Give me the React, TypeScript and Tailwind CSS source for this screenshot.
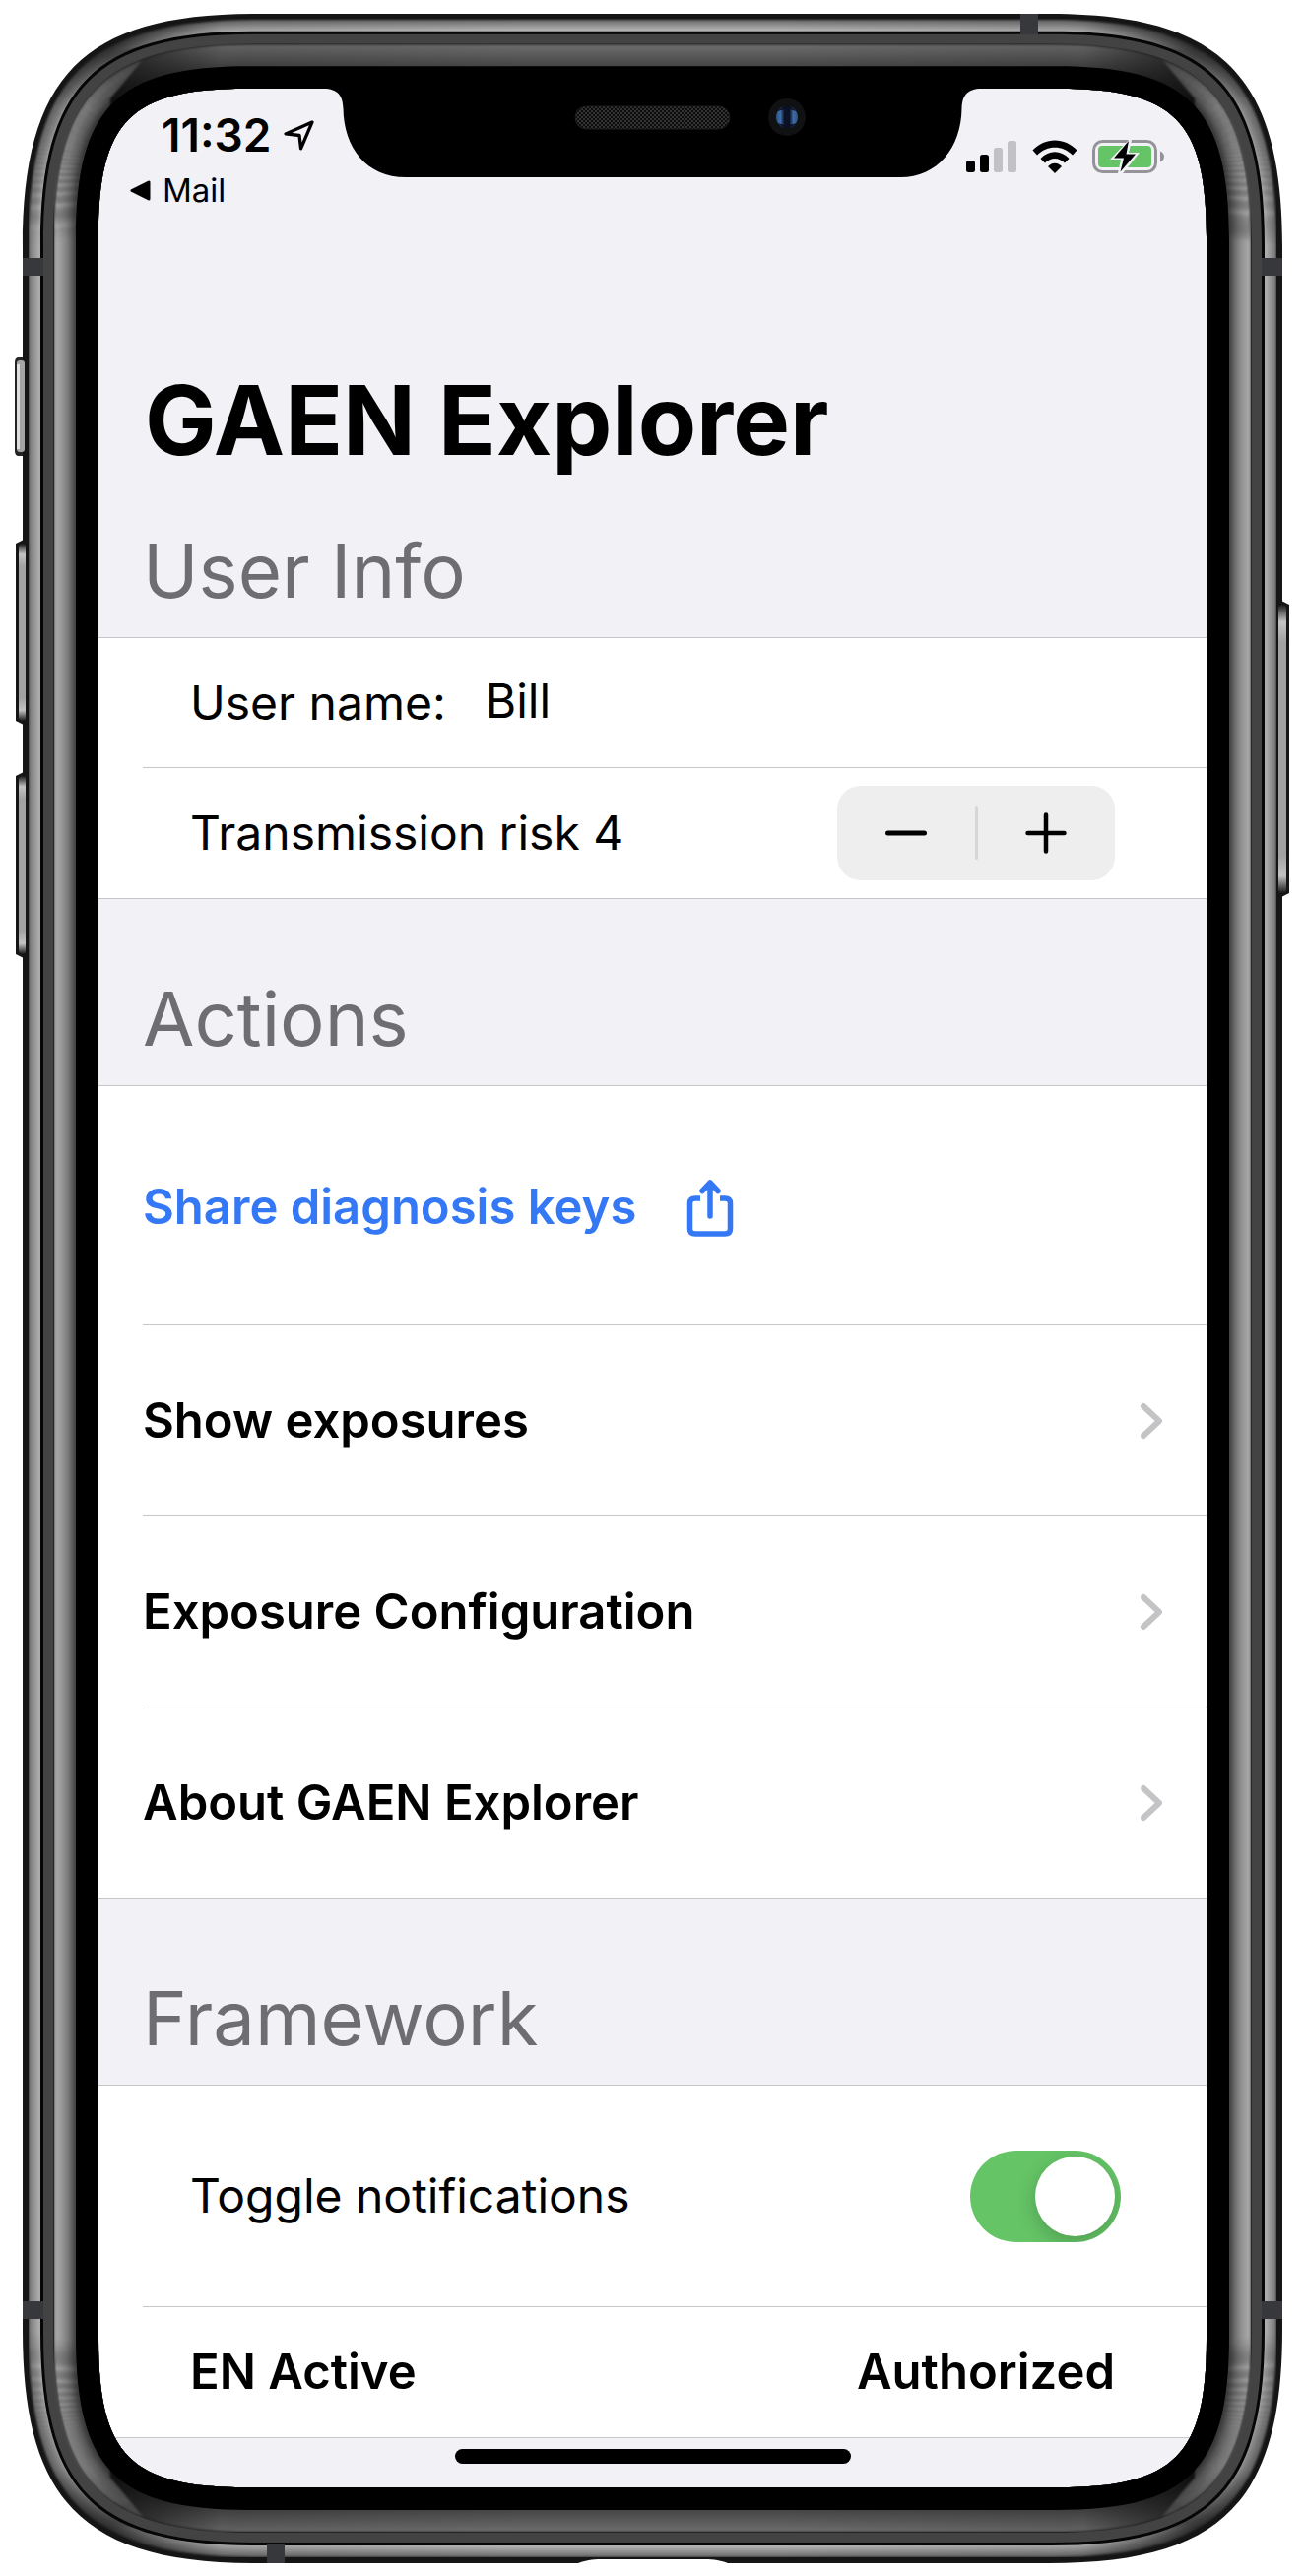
import { useState } from "react";
import type { ReactNode } from "react";

const W = 1325;
const H = 2616;

/** Continuous-corner outline of the handset, `d` pixels in from its outer edge. */
function outline(d: number) {
  const k = d / 77;
  const x0 = 23 + d;
  const x1 = 1302 - d;
  const y0 = 14 + k * 76;
  const y1 = 2603 - d;
  const e = 237 - 87 * k;
  const mid = 53 - 22 * k;
  const c = ((8 * mid) / e - 1) / 3;
  const q = e * c;
  return [
    `M${x0 + e} ${y0}H${x1 - e}`,
    `C${x1 - q} ${y0} ${x1} ${y0 + q} ${x1} ${y0 + e}`,
    `V${y1 - e}`,
    `C${x1} ${y1 - q} ${x1 - q} ${y1} ${x1 - e} ${y1}`,
    `H${x0 + e}`,
    `C${x0 + q} ${y1} ${x0} ${y1 - q} ${x0} ${y1 - e}`,
    `V${y0 + e}`,
    `C${x0} ${y0 + q} ${x0 + q} ${y0} ${x0 + e} ${y0}Z`,
  ].join("");
}

const SCREEN = outline(77);

function ring(from: number, inner = SCREEN) {
  return outline(from) + inner;
}

const grey = (v: number) => `rgb(${Math.round(v)},${Math.round(v)},${Math.round(v)})`;

interface Level {
  d: number;
  top: number;
  side: number;
}

function levels(from: number, to: number, top: number[], side: number[], bend: number): Level[] {
  const n = to - from;
  return Array.from({ length: n }, (_, i) => {
    const t = i / (n - 1);
    return {
      d: from + i,
      top: top[0] + (top[1] - top[0]) * t,
      side: side[0] + (side[1] - side[0]) * Math.pow(t, bend),
    };
  });
}

const RIM = levels(6, 18, [108, 182], [120, 176], 1);
const BEZEL = levels(32, 54, [108, 70], [166, 66], 1.8);
const BAND_END = outline(62);

function Bands({ id, items, left, right, low }: { id: string; items: Level[]; left: string; right: string; low: number }) {
  return (
    <g filter="url(#soft)">
      {items.map(({ d, top, side }) => (
        <g key={d}>
          <linearGradient id={`${id}t${d}`} gradientUnits="userSpaceOnUse" x1="0" x2={W} y1="0" y2="0">
            <stop offset="0.085" stopColor={grey(top * low)} />
            <stop offset="0.17" stopColor={grey(top * 0.9)} />
            <stop offset="0.4" stopColor={grey(top)} />
            <stop offset="0.6" stopColor={grey(top)} />
            <stop offset="0.83" stopColor={grey(top * 0.9)} />
            <stop offset="0.915" stopColor={grey(top * low)} />
          </linearGradient>
          <linearGradient id={`${id}s${d}`} gradientUnits="userSpaceOnUse" x1="0" x2="0" y1="0" y2={H}>
            <stop offset="0.022" stopColor={grey(side * 0.4)} />
            <stop offset="0.042" stopColor={grey(side * 0.85)} />
            <stop offset="0.085" stopColor={grey(side)} />
            <stop offset="0.915" stopColor={grey(side)} />
            <stop offset="0.958" stopColor={grey(side * 0.85)} />
            <stop offset="0.978" stopColor={grey(side * 0.4)} />
          </linearGradient>
          <path d={ring(d, BAND_END)} fillRule="evenodd" fill={`url(#${id}t${d})`} />
          <path d={ring(d, BAND_END)} fillRule="evenodd" fill={`url(#${id}s${d})`} clipPath={`url(#${left})`} />
          <path d={ring(d, BAND_END)} fillRule="evenodd" fill={`url(#${id}s${d})`} clipPath={`url(#${right})`} />
        </g>
      ))}
    </g>
  );
}

const BEZEL_LEFT = "0,0 200,0 143,63 112,100 112,2516 143,2553 200,2616 0,2616";
const BEZEL_RIGHT = "1325,0 1125,0 1182,63 1213,100 1213,2516 1182,2553 1125,2616 1325,2616";
const RIM_LEFT = "0,0 60,58 142,49 120,80 120,2537 142,2567 60,2558 0,2616";
const RIM_RIGHT = "1325,0 1265,58 1183,49 1205,80 1205,2537 1183,2567 1265,2558 1325,2616";

function SideKey({ x, y, h, flip }: { x: number; y: number; h: number; flip?: boolean }) {
  return (
    <g transform={flip ? `translate(${x + 11} ${y}) scale(-1 1)` : `translate(${x} ${y})`}>
      <path d={`M0 4L8 0V${h}L0 ${h - 4}Z`} fill="#161616" />
      <rect x="3" y="4" width="8" height={h - 8} rx="4" fill="url(#key)" />
    </g>
  );
}

function DeviceFrame() {
  return (
    <svg
      className="pointer-events-none absolute inset-0 h-full w-full"
      viewBox={`0 0 ${W} ${H}`}
      preserveAspectRatio="none"
      aria-hidden="true"
    >
      <defs>
        <filter id="soft" x="0" y="0" width="1" height="1" colorInterpolationFilters="sRGB">
          <feGaussianBlur stdDeviation="0.8" />
        </filter>
        <linearGradient id="key" x1="0" x2="0" y1="0" y2="1">
          <stop offset="0" stopColor="#1a1a1a" />
          <stop offset="0.06" stopColor="#c4c4c4" />
          <stop offset="0.13" stopColor="#a2a2a2" />
          <stop offset="0.87" stopColor="#a2a2a2" />
          <stop offset="0.94" stopColor="#c4c4c4" />
          <stop offset="1" stopColor="#1a1a1a" />
        </linearGradient>
        <linearGradient id="lens" x1="0" x2="1" y1="0" y2="0">
          <stop offset="0" stopColor="#2b5183" />
          <stop offset="0.2" stopColor="#3f6ea8" />
          <stop offset="0.38" stopColor="#0c1226" />
          <stop offset="0.62" stopColor="#0c1226" />
          <stop offset="0.8" stopColor="#3f6ea8" />
          <stop offset="1" stopColor="#2b5183" />
        </linearGradient>
        <pattern id="mesh" width="4" height="4" patternUnits="userSpaceOnUse">
          <rect width="4" height="4" fill="#0c0c0c" />
          <rect width="2" height="2" fill="#333" />
          <rect x="2" y="2" width="2" height="2" fill="#333" />
        </pattern>
        <clipPath id="bl"><polygon points={BEZEL_LEFT} /></clipPath>
        <clipPath id="br"><polygon points={BEZEL_RIGHT} /></clipPath>
        <clipPath id="rl"><polygon points={RIM_LEFT} /></clipPath>
        <clipPath id="rr"><polygon points={RIM_RIGHT} /></clipPath>
      </defs>

      <path d={`M0 0H${W}V${H}H0Z${SCREEN}`} fillRule="evenodd" fill="#fff" />

      <path d="M19 363H26V463H19Q15 463 15 458V368Q15 363 19 363Z" fill="#242426" />
      <SideKey x={16} y={548} h={188} />
      <SideKey x={16} y={784} h={189} />

      <path d={ring(0)} fillRule="evenodd" fill="#151515" />
      <Bands id="r" items={RIM} left="rl" right="rr" low={0.4} />
      <path d={ring(18)} fillRule="evenodd" fill="#060606" />
      <path d={ring(21)} fillRule="evenodd" fill="#434343" />
      <path d={ring(31)} fillRule="evenodd" fill="#252525" />
      <Bands id="b" items={BEZEL} left="bl" right="br" low={0.2} />
      <path d={ring(54)} fillRule="evenodd" fill="#000" />

      <rect x="17" y="366" width="8" height="93" rx="3" fill="#a5a5a5" />
      <rect x="17" y="370" width="3" height="86" fill="#dedede" />
      <rect x="20" y="552" width="6" height="180" rx="3" fill="url(#key)" />
      <rect x="20" y="788" width="6" height="181" rx="3" fill="url(#key)" />
      <SideKey x={1298} y={610} h={301} flip />

      <g fill="#37383c">
        <rect x="23" y="262" width="21" height="18" />
        <rect x="1281" y="262" width="21" height="18" />
        <rect x="23" y="2337" width="21" height="18" />
        <rect x="1281" y="2337" width="21" height="18" />
        <rect x="1036" y="14" width="18" height="21" />
        <rect x="271" y="2583" width="18" height="20" />
      </g>
      <path d="M584 2604C594 2600 602 2599 610 2599H716C724 2599 732 2600 742 2604Z" fill="#fff" />

      <path
        d="M328 89V90C344 90 348 98 348.500 110C349 150 372 180 412 180H914C952 180 976 150 976.500 110C977 98 981 90 997 90V89Z"
        fill="#000"
      />
      <rect x="584" y="108" width="157" height="23" rx="11.500" fill="url(#mesh)" stroke="#1c1c1c" />
      <circle cx="799" cy="119" r="19" fill="#101113" />
      <circle cx="799" cy="119" r="11" fill="url(#lens)" />
      <path d="M790 113A11 11 0 0 1 808 113Q799 109 790 113Z" fill="#0b1024" />
      <path d="M790 125A11 11 0 0 0 808 125Q799 129 790 125Z" fill="#0b1024" />
    </svg>
  );
}

function StatusBar() {
  return (
    <div className="flex h-[221px] items-start justify-between pt-5 pr-[42px] pl-8">
      <div className="flex flex-col">
        <div className="flex items-center gap-3 pl-8">
          <time className="text-[46px] leading-[54px] font-semibold">11:32</time>
          <svg width="31" height="31" viewBox="0 0 30 30" fill="none" stroke="#000" strokeWidth="3.2" strokeLinejoin="round" aria-hidden="true">
            <path d="M28 2L2 13.500L15.500 15L17 28Z" />
          </svg>
        </div>
        <a href="#mail" className="flex items-center gap-3 text-[33px] leading-[58px]">
          <svg width="21" height="21" viewBox="0 0 21 21" aria-hidden="true">
            <path d="M2 10.500L19 2V19Z" stroke="#000" strokeWidth="3" strokeLinejoin="round" />
          </svg>
          Mail
        </a>
      </div>
      <div className="flex items-center gap-[15px] pt-[31px]" role="img" aria-label="Two signal bars, Wi-Fi, charging">
        <svg width="52" height="34" viewBox="0 0 52 34">
          <rect x="0" y="21" width="9" height="12" rx="2.500" />
          <rect x="14" y="15" width="9" height="18" rx="2.500" />
          <rect x="28" y="8" width="9" height="25" rx="2.500" fill="#c1c1c6" />
          <rect x="42" y="1" width="9" height="32" rx="2.500" fill="#c1c1c6" />
        </svg>
        <svg width="46" height="34" viewBox="0 0 46 34">
          <path d="M0.500 10.500C13-3 33-3 45.500 10.500L41 15.500C31 5 15 5 5 15.500Z" />
          <path d="M8.500 19C17 10 29 10 37.500 19L33 23.500C27 17.500 19 17.500 13 23.500Z" />
          <path d="M16 27C20 22.500 26 22.500 30 27L23 34Z" />
        </svg>
        <svg width="74" height="36" viewBox="0 0 74 36">
          <rect x="1.500" y="2.500" width="63" height="31" rx="9" fill="none" stroke="#949498" strokeWidth="3" />
          <rect x="6" y="7" width="54" height="22" rx="4" fill="#65c466" />
          <path d="M69 12.500Q73 14.500 73 18T69 23.500Z" fill="#949498" />
          <path d="M37 1L18 21H29L26 35L31 35L48 14H37L40 1Z" fill="#f2f1f6" />
          <path d="M37 2L22 19.500H32L28.500 33.500L44 15.500H34.500Z" />
        </svg>
      </div>
    </div>
  );
}

function SectionTitle({ children, first }: { children: ReactNode; first?: boolean }) {
  return (
    <h2
      className={`border-b border-[#c6c6c8] px-[45px] pb-4 text-[76px] leading-[104px] text-[#6d6d72] ${first ? "pt-10" : "pt-[69px]"}`}
    >
      {children}
    </h2>
  );
}

function LinkRow({ label }: { label: string }) {
  return (
    <li className="ml-[45px] border-b border-[#c6c6c8] last:ml-0 last:pl-[45px]">
      <a href="#open" className="flex h-[193px] items-center justify-between pr-[43px] text-[49px] font-semibold">
        {label}
        <svg width="26" height="40" viewBox="0 0 26 40" fill="none" stroke="#c4c4c7" strokeWidth="6" strokeLinecap="round" strokeLinejoin="round" aria-hidden="true">
          <path d="M5 5L21 20L5 35" />
        </svg>
      </a>
    </li>
  );
}

export default function App() {
  const [name, setName] = useState("Bill");
  const [risk, setRisk] = useState(4);
  const [on, setOn] = useState(true);
  return (
    <div className="relative mx-auto w-full max-w-[1325px] bg-white px-[100px] pt-[90px] pb-[90px] font-['Inter',sans-serif] text-black">
      <main className="bg-[#f2f1f6]">
        <StatusBar />
        <h1 className="px-[47px] pt-[56px] text-[97px] leading-[120px] font-bold">GAEN Explorer</h1>

        <section>
          <SectionTitle first>User Info</SectionTitle>
          <div className="bg-white">
            <div className="ml-[45px] flex h-[132px] items-center gap-10 border-b border-[#c6c6c8] pr-[93px] pl-12 text-[48px]">
              <label htmlFor="user-name">User name:</label>
              <input
                id="user-name"
                value={name}
                onChange={(e) => setName(e.target.value)}
                className="mb-1 min-w-0 flex-1 bg-transparent outline-none"
              />
            </div>
            <div className="flex h-[133px] items-center justify-between border-b border-[#c6c6c8] pr-[93px] pl-[93px] text-[48px]">
              <span>Transmission risk {risk}</span>
              <div className="flex h-24 w-[282px] items-center rounded-3xl bg-[#eeeeee]">
                <button
                  type="button"
                  aria-label="Decrease risk"
                  className="flex h-full flex-1 items-center justify-center"
                  onClick={() => setRisk(Math.max(0, risk - 1))}
                >
                  <svg width="44" height="44" viewBox="0 0 44 44" stroke="#000" strokeWidth="5" strokeLinecap="round">
                    <path d="M3.500 22H40.500" />
                  </svg>
                </button>
                <span className="h-[54px] w-[3px] rounded bg-[#d6d6d8]" />
                <button
                  type="button"
                  aria-label="Increase risk"
                  className="flex h-full flex-1 items-center justify-center"
                  onClick={() => setRisk(Math.min(7, risk + 1))}
                >
                  <svg width="44" height="44" viewBox="0 0 44 44" stroke="#000" strokeWidth="4.500" strokeLinecap="round">
                    <path d="M3.500 22H40.500M22 3.500V40.500" />
                  </svg>
                </button>
              </div>
            </div>
          </div>
        </section>

        <section>
          <SectionTitle>Actions</SectionTitle>
          <ul className="bg-white">
            <li className="ml-[45px] border-b border-[#c6c6c8]">
              <button type="button" className="flex h-[242px] items-center gap-[50px] pt-1 text-[49px] font-semibold text-[#3478f6]">
                Share diagnosis keys
                <svg width="50" height="60" viewBox="0 0 50 60" fill="none" stroke="#3478f6" strokeWidth="5.500" strokeLinecap="round" strokeLinejoin="round" aria-hidden="true">
                  <path d="M25 39V5M17 13.500L25 5L33 13.500" />
                  <path d="M15 21H10Q4.500 21 4.500 26V52Q4.500 57 10 57H40Q45.500 57 45.500 52V26Q45.500 21 40 21H35" strokeLinecap="butt" />
                </svg>
              </button>
            </li>
            <LinkRow label="Show exposures" />
            <LinkRow label="Exposure Configuration" />
            <LinkRow label="About GAEN Explorer" />
          </ul>
        </section>

        <section>
          <SectionTitle>Framework</SectionTitle>
          <div className="bg-white">
            <div className="ml-[45px] flex h-[225px] items-center justify-between border-b border-[#c6c6c8] pr-[87px] pl-12 text-[48px]">
              <label htmlFor="notifications">Toggle notifications</label>
              <input
                id="notifications"
                type="checkbox"
                role="switch"
                checked={on}
                onChange={(e) => setOn(e.target.checked)}
                className="flex h-[93px] w-[153px] appearance-none items-center overflow-hidden rounded-full bg-[#e9e9eb] px-1.5 before:block before:size-[81px] before:rounded-full before:bg-white before:shadow-[0_6px_20px_rgba(0,0,0,0.2)] checked:justify-end checked:bg-[#65c466]"
              />
            </div>
            <div className="flex h-[133px] items-center justify-between border-b border-[#c6c6c8] pr-[93px] pl-[93px] text-[49px] font-semibold">
              <span>EN Active</span>
              <span>Authorized</span>
            </div>
          </div>
        </section>
        <div className="flex h-[50px] justify-center pt-[11px]">
          <div className="h-[15px] w-[402px] rounded-full bg-black" />
        </div>
      </main>
      <DeviceFrame />
    </div>
  );
}
